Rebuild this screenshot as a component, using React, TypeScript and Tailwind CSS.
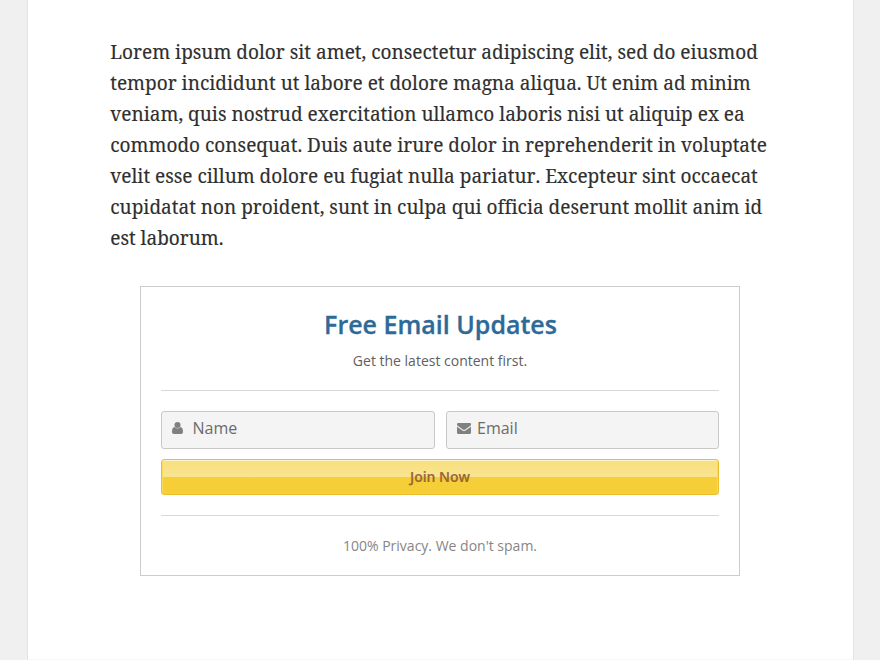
const inputClass =
  "flex h-[38px] items-center rounded-[3px] border border-[#c8c8c8] bg-[#f4f4f4] pb-1 text-base text-[#6b6b6b]";

function UserIcon() {
  return (
    <svg className="ml-[10px] mr-[9.5px] h-3 w-[11px] shrink-0" viewBox="0 0 11 12" fill="#808080">
      <path d="M5.500 0a3.050 3.050 0 1 1 0 6.100 3.050 3.050 0 0 1 0-6.100Z" />
      <path d="M2.500 5.100C.7 5.200 0 7.400 0 9.800 0 11.200.8 12 2 12h7c1.200 0 2-.8 2-2.200 0-2.400-.7-4.600-2.500-4.700-.9.900-1.900 1.300-3 1.300s-2.100-.4-3-1.300Z" />
    </svg>
  );
}

function EnvelopeIcon() {
  return (
    <svg className="ml-[10px] mr-[6px] mt-[1px] h-[11px] w-[14px] shrink-0" viewBox="0 0 14 11" fill="#808080">
      <path d="M1.200 0h11.600C13.500 0 14 .5 14 1.200c0 .9-.6 1.600-1.300 2.100L8.500 6.200C8 6.500 7.500 6.900 7 6.900s-1-.4-1.500-.7L1.300 3.300C.7 2.900 0 2.100 0 1.400 0 .6.400 0 1.200 0Z" />
      <path d="M0 3.600c.2.200.5.500.8.700l4 2.700c.6.500 1.400 1 2.200 1s1.600-.5 2.200-1l4-2.700c.3-.2.600-.5.800-.7v6.200c0 .7-.6 1.200-1.200 1.200H1.200C.6 11 0 10.500 0 9.800Z" />
    </svg>
  );
}

export default function App() {
  return (
    <div className="h-[660px] w-[880px] overflow-hidden bg-[#f0f0f0] pl-[27px]">
      <main className="flex h-full w-[827px] flex-col border-x border-[#e3e3e3] bg-white">
        <div className="flex-1 px-[82px] pt-[37px]">
          <p className="w-[662px] whitespace-pre-line pl-[0.25px] font-['Noto_Serif','DejaVu_Serif',serif] text-[19px] leading-[31px] text-[#2f2f2f] [font-kerning:none] [font-variant-ligatures:none] [-webkit-text-stroke:0.15px_#2f2f2f]">
            {`Lorem ipsum dolor sit amet, consectetur adipiscing elit, sed do eiusmod
tempor incididunt ut labore et dolore magna aliqua. Ut enim ad minim
veniam, quis nostrud exercitation ullamco laboris nisi ut aliquip ex ea
commodo consequat. Duis aute irure dolor in reprehenderit in voluptate
velit esse cillum dolore eu fugiat nulla pariatur. Excepteur sint occaecat
cupidatat non proident, sunt in culpa qui officia deserunt mollit anim id
est laborum.`}
          </p>
          <section className="ml-[30px] mt-[32px] h-[290px] w-[600px] border border-[#ccc] px-5 pt-5 text-center font-['Open_Sans',sans-serif]">
            <h2 className="pl-px text-[25px] font-semibold leading-[35px] text-[#2d6a98] [-webkit-text-stroke:0.3px_#2d6a98]">Free Email Updates</h2>
            <p className="mt-[9px] text-sm leading-5 text-[#606060]">Get the latest content first.</p>
            <hr className="mt-[19px] border-[#d8d8d8]" />
            <div className="mt-5 flex gap-[11px]">
              <div className={inputClass + " w-[274px]"}><UserIcon />Name</div>
              <div className={inputClass + " w-[273px]"}><EnvelopeIcon />Email</div>
            </div>
            <button className="mt-[10px] block h-9 w-full rounded-[3px] border border-[#edbe2a] bg-[linear-gradient(to_bottom,#f8df7c_0,#f9e492_17px,#f6ce38_17px,#f6ce38_100%)] text-sm font-semibold leading-[34px] text-[#996633] shadow-[inset_0_1px_0_#fdf4cb,inset_1px_0_0_#f9da5f,inset_-1px_0_0_#f9da5f] [-webkit-text-stroke:0.2px_#996633]">Join Now</button>
            <hr className="mt-5 border-[#d8d8d8]" />
            <p className="mt-5 text-sm leading-5 text-[#868686]">100% Privacy. We don't spam.</p>
          </section>
        </div>
        <div className="h-px bg-[#f6f6f6]" />
      </main>
    </div>
  );
}
